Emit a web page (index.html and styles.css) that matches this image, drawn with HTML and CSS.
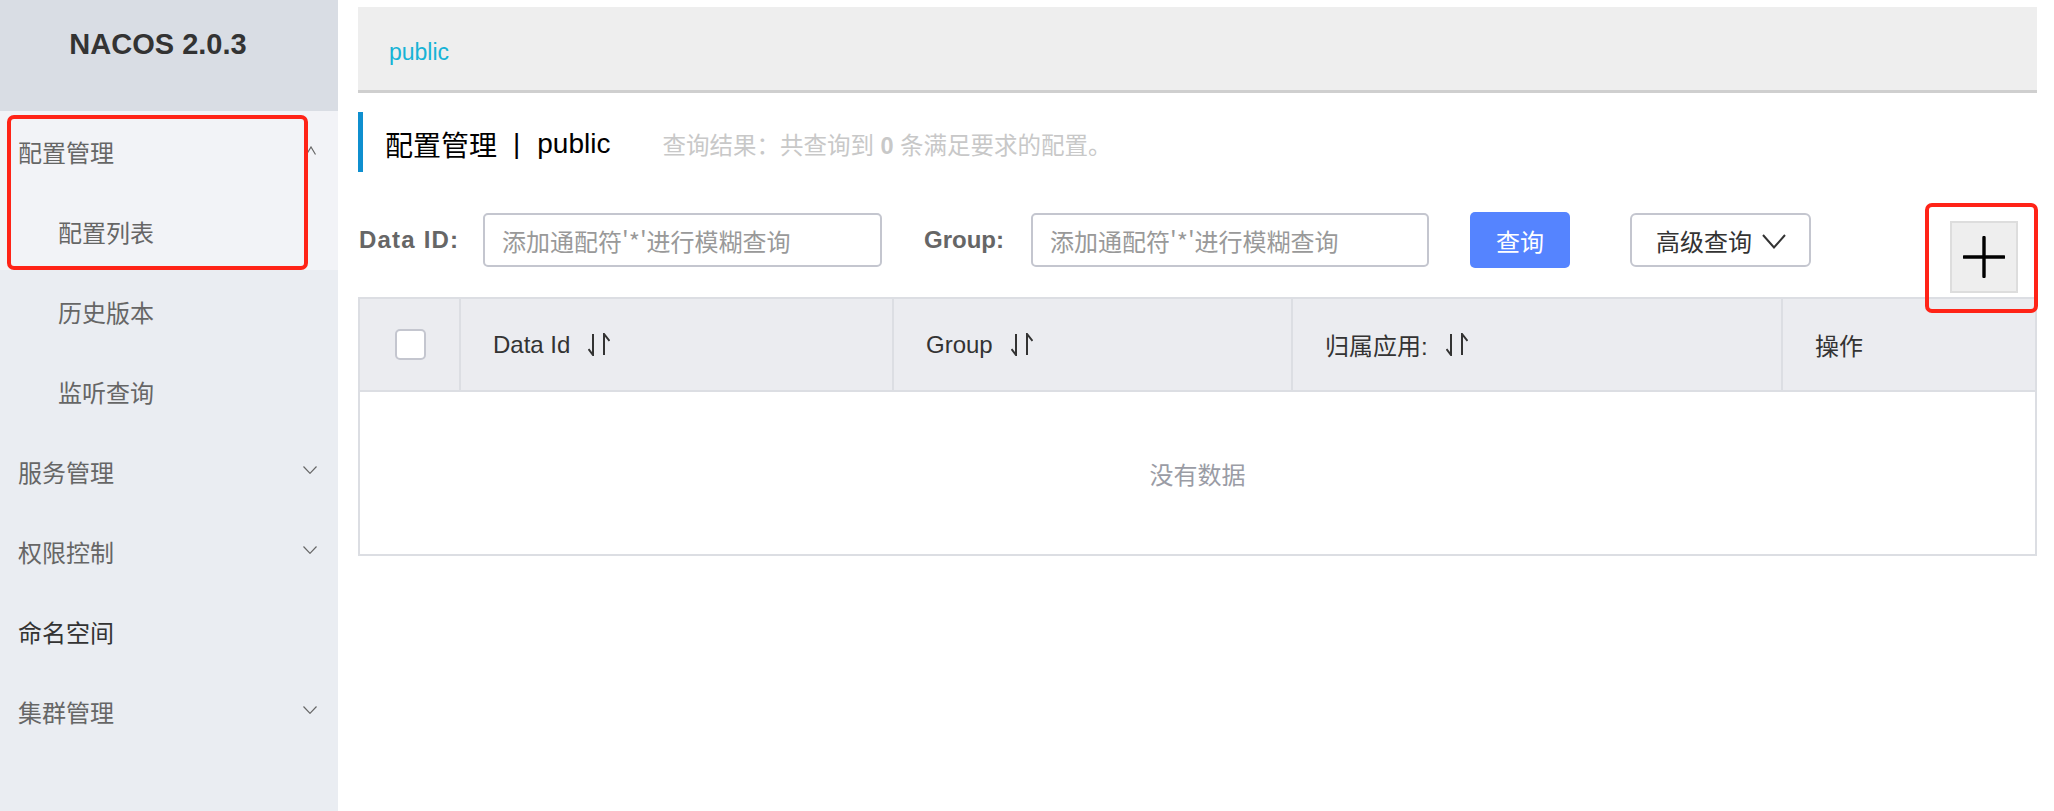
FILE: index.html
```html
<!DOCTYPE html>
<html lang="zh-CN">
<head>
<meta charset="utf-8">
<title>Nacos</title>
<link rel="stylesheet" href="styles.css">
</head>
<body>
<div class="app">
  <aside class="sidebar">
    <div class="logo">NACOS 2.0.3</div>
    <div class="menu-open">
      <div class="menu-item head">
        <span>配置管理</span>
        <svg class="chev-up" width="10" height="9" viewBox="0 0 10 9"><polyline points="0.5,8.5 5,1 9.5,8.5" fill="none" stroke="#666" stroke-width="1.2"/></svg>
      </div>
      <div class="menu-item sub first-sub">配置列表</div>
    </div>
    <div class="menu-rest">
      <div class="menu-item sub">历史版本</div>
      <div class="menu-item sub">监听查询</div>
      <div class="menu-item head">
        <span>服务管理</span>
        <svg class="chev" width="14" height="8" viewBox="0 0 14 8"><polyline points="0.5,0.5 7,7.3 13.5,0.5" fill="none" stroke="#666" stroke-width="1.2"/></svg>
      </div>
      <div class="menu-item head">
        <span>权限控制</span>
        <svg class="chev" width="14" height="8" viewBox="0 0 14 8"><polyline points="0.5,0.5 7,7.3 13.5,0.5" fill="none" stroke="#666" stroke-width="1.2"/></svg>
      </div>
      <div class="menu-item head dark"><span>命名空间</span></div>
      <div class="menu-item head">
        <span>集群管理</span>
        <svg class="chev" width="14" height="8" viewBox="0 0 14 8"><polyline points="0.5,0.5 7,7.3 13.5,0.5" fill="none" stroke="#666" stroke-width="1.2"/></svg>
      </div>
    </div>
  </aside>

  <main class="main">
    <div class="ns-bar"><span class="ns-link">public</span></div>

    <div class="title">
      <span class="title-text">配置管理</span>
      <span class="title-sep">|</span>
      <span class="title-text">public</span>
      <span class="result">查询结果：共查询到 <b>0</b> 条满足要求的配置。</span>
    </div>

    <div class="search">
      <label class="lbl lbl-id">Data ID:</label>
      <div class="input in-1">添加通配符'*'进行模糊查询</div>
      <label class="lbl lbl-group">Group:</label>
      <div class="input in-2">添加通配符'*'进行模糊查询</div>
      <button class="btn-primary">查询</button>
      <button class="btn-adv">高级查询
        <svg width="24" height="15" viewBox="0 0 24 15"><polyline points="1,1 12,13.5 23,1" fill="none" stroke="#333" stroke-width="2"/></svg>
      </button>
      <button class="btn-add" aria-label="add">
        <svg width="42" height="42" viewBox="0 0 42 42"><path d="M1 21 H41 M21 1.5 V40.5" stroke="#000" stroke-width="3.4" fill="none" stroke-linecap="round"/></svg>
      </button>
    </div>

    <div class="table">
      <div class="thead">
        <div class="th th-check"><span class="checkbox"></span></div>
        <div class="th">Data Id <svg class="sort" width="22" height="23" viewBox="0 0 22 23"><path d="M5 1 V22 L0.5 16 M16 22 V1 L21.5 8" fill="none" stroke="#333" stroke-width="2"/></svg></div>
        <div class="th">Group <svg class="sort" width="22" height="23" viewBox="0 0 22 23"><path d="M5 1 V22 L0.5 16 M16 22 V1 L21.5 8" fill="none" stroke="#333" stroke-width="2"/></svg></div>
        <div class="th">归属应用: <svg class="sort" width="22" height="23" viewBox="0 0 22 23"><path d="M5 1 V22 L0.5 16 M16 22 V1 L21.5 8" fill="none" stroke="#333" stroke-width="2"/></svg></div>
        <div class="th">操作</div>
      </div>
      <div class="tbody">没有数据</div>
    </div>
  </main>
</div>

<div class="mark mark-menu"></div>
<div class="mark mark-add"></div>
</body>
</html>
```

FILE: styles.css
```css
* { box-sizing: border-box; }

html, body {
  margin: 0;
  padding: 0;
  background: #fff;
  font-family: "Liberation Sans", "Noto Sans CJK SC", sans-serif;
  color: #333;
}

.app {
  display: flex;
  min-height: 811px;
}

/* ---------- sidebar ---------- */
.sidebar {
  width: 338px;
  flex: 0 0 338px;
  background: #eaedf2;
  min-height: 811px;
}

.logo {
  height: 111px;
  background: #d9dde4;
  font-size: 29px;
  font-weight: bold;
  color: #333;
  text-align: center;
  padding-right: 22px;
  padding-top: 27px;
  line-height: 34px;
}

.menu-open {
  background: #f2f3f7;
  height: 159px;
  padding-top: 3px;
}

.menu-rest {
  padding-top: 4px;
}

.menu-item {
  height: 80px;
  display: flex;
  align-items: center;
  font-size: 24px;
  color: #666;
  font-family: "Noto Sans CJK SC", sans-serif;
  padding-right: 21px;
  padding-bottom: 5px;
}

.menu-item.head {
  padding-left: 18px;
  justify-content: space-between;
}

.menu-item.sub {
  padding-left: 58px;
}

.menu-item.first-sub {
  height: 76px;
  padding-top: 4px;
}

.menu-item.dark { color: #333; }

.chev-up { margin-top: -2px; margin-right: 1px; }
.chev { margin-top: -4px; }

/* ---------- main ---------- */
.main {
  flex: 1;
  padding: 7px 17px 0 20px;
  min-width: 0;
}

.ns-bar {
  height: 86px;
  background: #eeeeee;
  border-bottom: 3px solid #cfcfcf;
  display: flex;
  align-items: center;
  padding-left: 31px;
  padding-top: 8px;
}

.ns-link {
  color: #17b3d6;
  font-size: 23px;
}

.title {
  margin-top: 19px;
  height: 60px;
  border-left: 5px solid #0f8fcf;
  padding-left: 22px;
  padding-top: 4px;
  display: flex;
  align-items: center;
  font-family: "Liberation Sans", "Noto Sans CJK SC", sans-serif;
}

.title-text {
  font-size: 28px;
  color: #000;
}

.title-sep {
  font-size: 28px;
  color: #000;
  margin: 0 17px 0 16px;
}

.result {
  margin-left: 52px;
  font-size: 23.5px;
  color: #c8c8c8;
}

.result b { font-weight: bold; }

.search {
  margin-top: 40px;
  display: flex;
  align-items: flex-start;
  height: 81px;
}

.lbl {
  font-size: 24px;
  font-weight: bold;
  color: #666;
  height: 56px;
  line-height: 56px;
}

.lbl-id { width: 125px; padding-left: 1px; letter-spacing: 1.2px; }
.lbl-group { width: 107px; }

.input {
  margin-top: 1px;
  height: 54px;
  border: 2px solid #c4c6cf;
  border-radius: 5px;
  font-size: 24px;
  color: #999;
  padding-left: 17px;
  display: flex;
  align-items: center;
  font-family: "Noto Sans CJK SC", sans-serif;
}

.in-1 { width: 399px; margin-right: 42px; }
.in-2 { width: 398px; margin-right: 41px; }

.btn-primary {
  width: 100px;
  height: 56px;
  border: none;
  border-radius: 5px;
  background: #5584ff;
  color: #fff;
  font-size: 24px;
  font-family: "Noto Sans CJK SC", sans-serif;
  margin-right: 60px;
  padding: 0;
}

.btn-adv {
  margin-top: 1px;
  width: 181px;
  height: 54px;
  border: 2px solid #c4c6cf;
  border-radius: 6px;
  background: #fff;
  color: #333;
  font-size: 24px;
  font-family: "Noto Sans CJK SC", sans-serif;
  display: flex;
  align-items: center;
  padding: 0 0 0 24px;
  gap: 10px;
}

.btn-adv svg { margin-top: 2px; }

.btn-add {
  margin-left: auto;
  margin-right: 19px;
  margin-top: 9px;
  width: 68px;
  height: 72px;
  background: #eeeeee;
  border: 2px solid #dddddd;
  display: flex;
  align-items: center;
  justify-content: center;
  padding: 0;
}

/* ---------- table ---------- */
.table {
  margin-top: 4px;
  border: 2px solid #dcdee3;
}

.thead {
  display: grid;
  grid-template-columns: 99px 433px 399px 490px 1fr;
  height: 93px;
  background: #ebecf0;
  border-bottom: 2px solid #dcdee3;
}

.th {
  display: flex;
  align-items: center;
  padding-left: 32px;
  border-left: 2px solid #dcdee3;
  font-size: 24px;
  color: #333;
  font-family: "Liberation Sans", "Noto Sans CJK SC", sans-serif;
}

.th-check {
  border-left: none;
  padding-left: 0;
  justify-content: center;
}

.checkbox {
  width: 31px;
  height: 31px;
  border: 2px solid #c4c6cf;
  border-radius: 5px;
  background: #fff;
  margin-left: 1px;
}

.sort { margin-left: 18px; }

.tbody {
  height: 162px;
  display: flex;
  align-items: center;
  justify-content: center;
  font-size: 24px;
  color: #9a9ca5;
  font-family: "Noto Sans CJK SC", sans-serif;
}

/* ---------- annotation marks ---------- */
.mark {
  position: absolute;
  border: 4px solid #ff2317;
  border-radius: 7px;
  pointer-events: none;
}

.mark-menu {
  left: 7px;
  top: 115px;
  width: 301px;
  height: 155px;
}

.mark-add {
  left: 1925px;
  top: 203px;
  width: 113px;
  height: 110px;
}
```
